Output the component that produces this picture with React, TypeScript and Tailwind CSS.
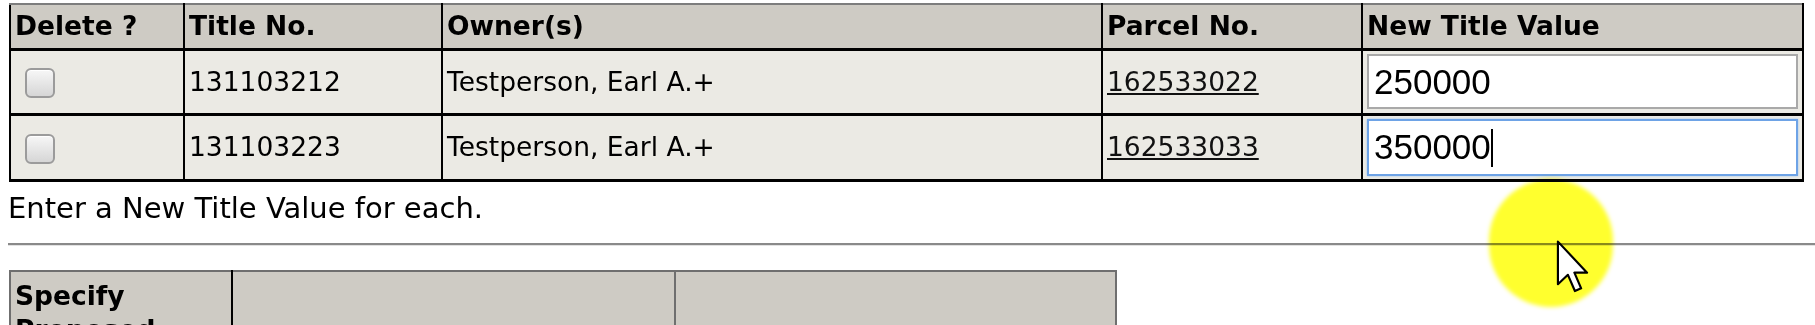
import React from 'react'

const rows = [
  { title: '131103212', owner: 'Testperson, Earl A.+', parcel: '162533022', value: '250000', focused: false },
  { title: '131103223', owner: 'Testperson, Earl A.+', parcel: '162533033', value: '350000', focused: true },
]

function Checkbox() {
  return (
    <span className="inline-block w-[30px] h-[30px] rounded-[6px] border-2 border-[#9b9b9b] bg-gradient-to-b from-[#f7f7f7] to-[#d6d6d6] shadow-[inset_0_1px_0_#ffffff] align-middle" />
  )
}

function ValueBox({ value, focused }: { value: string; focused: boolean }) {
  return (
    <div className="relative">
      <input
        readOnly
        defaultValue={value}
        className={
          focused
            ? 'block w-full h-[57px] px-[5px] bg-white text-black text-[35px] border-2 border-[#6ea3e6] shadow-[0_0_2px_#9cc4f2] outline-none'
            : 'block w-full h-[55px] px-[5px] bg-white text-black text-[35px] border-2 border-[#a9a9a9] outline-none'
        }
        style={{ fontFamily: '"Liberation Sans", Arial, sans-serif' }}
      />
      {focused && <span className="absolute left-[124px] top-[10px] w-[2px] h-[38px] bg-black" />}
    </div>
  )
}

export default function App() {
  const th = 'h-[45px] px-[4px] text-left align-middle font-bold text-[26.5px] text-black bg-[#cecbc4] border-x-2 border-b-[3px] border-t-2 border-x-black border-b-black border-t-[#7d7d7d]'
  const td = 'px-[4px] align-middle text-[26.5px] text-black bg-[#ebeae4] border-x-2 border-y-[3px] border-black'

  return (
    <div
      className="relative w-full h-[325px] overflow-hidden bg-white pt-[3px]"
      style={{ fontFamily: '"DejaVu Sans", Verdana, sans-serif' }}
    >
      <table className="ml-[9px] w-[1793px] table-fixed border-collapse">
        <colgroup>
          <col className="w-[174px]" />
          <col className="w-[258px]" />
          <col className="w-[660px]" />
          <col className="w-[260px]" />
          <col className="w-[441px]" />
        </colgroup>
        <thead>
          <tr>
            <th className={th}>Delete ?</th>
            <th className={th}>Title No.</th>
            <th className={th}>Owner(s)</th>
            <th className={th}>Parcel No.</th>
            <th className={th}>New Title Value</th>
          </tr>
        </thead>
        <tbody>
          {rows.map((r) => (
            <tr key={r.title} className="h-[65px]">
              <td className={td + ' pl-[14px]'}>
                <Checkbox />
              </td>
              <td className={td}>{r.title}</td>
              <td className={td}>{r.owner}</td>
              <td className={td}>
                <a className="underline text-[#111]">{r.parcel}</a>
              </td>
              <td className={td + ' py-[3px]'}>
                <ValueBox value={r.value} focused={r.focused} />
              </td>
            </tr>
          ))}
        </tbody>
      </table>

      <p className="ml-[8px] mt-[9px] text-[29px] leading-[35px] text-black">Enter a New Title Value for each.</p>

      <div className="ml-[8px] mt-[17px] h-[3px] border-t-2 border-b border-t-[#8a8a8a] border-b-[#e2e2e2]" />

      <table className="ml-[9px] mt-[24px] w-[1106px] table-fixed border-collapse">
        <colgroup>
          <col className="w-[222px]" />
          <col className="w-[443px]" />
          <col className="w-[441px]" />
        </colgroup>
        <tbody>
          <tr className="h-[100px]">
            <td className="px-[4px] pt-[7px] align-top font-bold text-[26.5px] leading-[34px] text-black bg-[#cecbc4] border-2 border-[#6f6f6f] border-r-black">
              Specify Proposed
            </td>
            <td className="bg-[#cecbc4] border-2 border-[#6f6f6f] border-l-black" />
            <td className="bg-[#cecbc4] border-2 border-[#6f6f6f]" />
          </tr>
        </tbody>
      </table>

      {/* cursor highlight */}
      <div className="absolute left-[1489px] top-[179px] w-[124px] h-[128px] rounded-full bg-[#ffff2e] mix-blend-multiply blur-[2px]" />
      <svg className="absolute left-[1556px] top-[240px]" width="33" height="54" viewBox="0 0 12 20">
        <path
          d="M0.6 0.6 L0.6 16.4 L4.3 12.9 L6.9 18.9 L9.2 17.9 L6.7 12.1 L11.4 12.1 Z"
          fill="#ffffff"
          stroke="#000000"
          strokeWidth="0.8"
          strokeLinejoin="round"
        />
      </svg>
    </div>
  )
}
